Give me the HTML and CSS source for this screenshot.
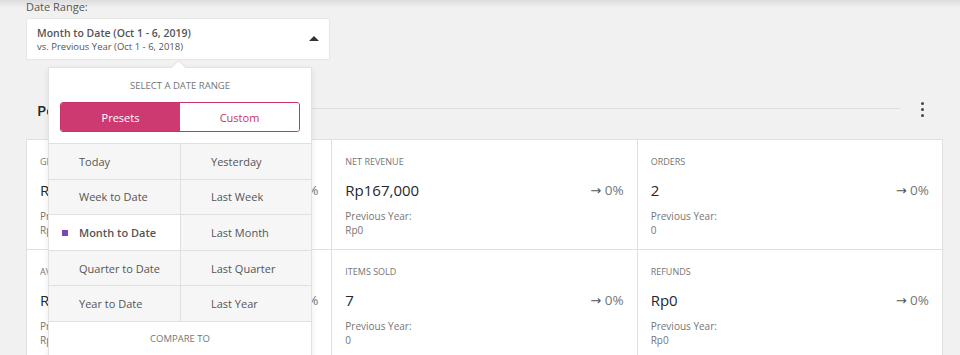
FILE: index.html
```html
<!DOCTYPE html>
<html lang="en">
  <head>
    <meta charset="UTF-8" />
    <meta name="viewport" content="width=device-width, initial-scale=1.0" />
    <title>Analytics - Revenue</title>
    <link rel="stylesheet" href="styles.css">
  </head>
  <body>
    <div class="top_shadow"></div>
    <div class="page">
      <div class="filter_label">Date Range:</div>
      <div class="date_filter">
        <button class="date_button">
          <span class="date_text">
            <span class="date_main">Month to Date (Oct 1 - 6, 2019)</span>
            <span class="date_compare">vs. Previous Year (Oct 1 - 6, 2018)</span>
          </span>
          <span class="caret"></span>
        </button>

        <!-- dropdown, opened -->
        <div class="popover">
          <div class="popover_title">Select a date range</div>
          <div class="tabs">
            <span class="tab active">Presets</span>
            <span class="tab">Custom</span>
          </div>
          <div class="presets">
            <div class="preset">Today</div>
            <div class="preset">Yesterday</div>
            <div class="preset">Week to Date</div>
            <div class="preset">Last Week</div>
            <div class="preset selected">Month to Date</div>
            <div class="preset">Last Month</div>
            <div class="preset">Quarter to Date</div>
            <div class="preset">Last Quarter</div>
            <div class="preset">Year to Date</div>
            <div class="preset">Last Year</div>
          </div>
          <div class="popover_title compare">Compare to</div>
        </div>
      </div>

      <div class="section_header">
        <h2>Performance</h2>
        <div class="header_line"></div>
        <span class="menu_dots"><i></i><i></i><i></i></span>
      </div>

      <div class="cards">
        <div class="card">
          <div class="card_label">Gross Revenue</div>
          <div class="card_row"><span class="card_value">Rp167,000</span><span class="delta"><span class="arrow">&#x2192;</span> 0%</span></div>
          <div class="card_prev">Previous Year:</div>
          <div class="card_prev">Rp0</div>
        </div>
        <div class="card">
          <div class="card_label">Net Revenue</div>
          <div class="card_row"><span class="card_value">Rp167,000</span><span class="delta"><span class="arrow">&#x2192;</span> 0%</span></div>
          <div class="card_prev">Previous Year:</div>
          <div class="card_prev">Rp0</div>
        </div>
        <div class="card">
          <div class="card_label">Orders</div>
          <div class="card_row"><span class="card_value">2</span><span class="delta"><span class="arrow">&#x2192;</span> 0%</span></div>
          <div class="card_prev">Previous Year:</div>
          <div class="card_prev">0</div>
        </div>
        <div class="card">
          <div class="card_label">Average Order Value</div>
          <div class="card_row"><span class="card_value">Rp83,500</span><span class="delta"><span class="arrow">&#x2192;</span> 0%</span></div>
          <div class="card_prev">Previous Year:</div>
          <div class="card_prev">Rp0</div>
        </div>
        <div class="card">
          <div class="card_label">Items Sold</div>
          <div class="card_row"><span class="card_value">7</span><span class="delta"><span class="arrow">&#x2192;</span> 0%</span></div>
          <div class="card_prev">Previous Year:</div>
          <div class="card_prev">0</div>
        </div>
        <div class="card">
          <div class="card_label">Refunds</div>
          <div class="card_row"><span class="card_value">Rp0</span><span class="delta"><span class="arrow">&#x2192;</span> 0%</span></div>
          <div class="card_prev">Previous Year:</div>
          <div class="card_prev">Rp0</div>
        </div>
      </div>
    </div>
  </body>
</html>
```

FILE: styles.css
```css
body {
  margin: 0;
  background-color: #f1f1f1;
  font-family: "Open Sans", "Noto Sans", sans-serif;
  color: #555;
  overflow: hidden;
}
.top_shadow {
  position: absolute;
  top: 0;
  left: 0;
  right: 0;
  height: 8px;
  background: linear-gradient(#dcdcdc, #f1f1f1);
}
.page {
  position: relative;
  padding: 0 17px 0 26px;
}
.filter_label {
  font-size: 11px;
  line-height: 14px;
  color: #555;
}
.date_filter {
  position: relative;
  width: 304px;
  margin-top: 4px;
}
.date_button {
  box-sizing: border-box;
  width: 304px;
  height: 42px;
  display: flex;
  align-items: center;
  justify-content: space-between;
  padding: 0 10px 0 10px;
  background-color: #fff;
  border: 1px solid #e6e6e6;
  border-radius: 2px;
  font-family: inherit;
  text-align: left;
  cursor: pointer;
}
.date_text {
  display: flex;
  flex-direction: column;
}
.date_main {
  font-size: 10.5px;
  font-weight: 600;
  color: #555;
  line-height: 14px;
}
.date_compare {
  font-size: 9.5px;
  color: #555;
  line-height: 13px;
}
.caret {
  width: 0;
  height: 0;
  border-left: 5px solid transparent;
  border-right: 5px solid transparent;
  border-bottom: 5px solid #333;
  margin-top: -1px;
}
.popover {
  position: absolute;
  z-index: 2;
  top: 49px;
  left: 22px;
  width: 264px;
  box-sizing: border-box;
  background-color: #fff;
  border: 1px solid #e2e2e2;
  box-shadow: 0 2px 6px rgba(0, 0, 0, 0.08);
}
.popover::before {
  content: "";
  position: absolute;
  top: -6px;
  left: 124px;
  width: 10px;
  height: 10px;
  background-color: #fff;
  border-top: 1px solid #e2e2e2;
  border-left: 1px solid #e2e2e2;
  transform: rotate(45deg);
}
.popover_title {
  text-align: center;
  text-transform: uppercase;
  font-size: 9.5px;
  color: #757575;
  line-height: 14px;
  padding-top: 11px;
}
.popover_title.compare {
  padding: 10px 0 20px;
}
.tabs {
  box-sizing: border-box;
  display: flex;
  margin: 9px 11px 11px;
  height: 30px;
  border: 1px solid #c93269;
  border-radius: 3px;
  overflow: hidden;
}
.tab {
  flex: 1;
  display: flex;
  align-items: center;
  justify-content: center;
  font-size: 11px;
  color: #c93269;
  background-color: #fff;
}
.tab.active {
  background-color: #cd3a72;
  color: #fff;
}
.presets {
  display: grid;
  grid-template-columns: 132px 1fr;
  background-color: #f6f6f6;
  border-top: 1px solid #e0e0e0;
}
.preset {
  box-sizing: border-box;
  position: relative;
  display: flex;
  align-items: center;
  height: 35.6px;
  padding-left: 30px;
  font-size: 11px;
  color: #555;
  border-bottom: 1px solid #e0e0e0;
  border-right: 1px solid #e0e0e0;
}
.preset:nth-child(2n) {
  border-right: none;
}
.preset.selected {
  background-color: #fff;
  font-weight: 600;
}
.preset.selected::before {
  content: "";
  position: absolute;
  left: 13px;
  top: 15px;
  width: 6px;
  height: 6px;
  background-color: #7b45b8;
}
.section_header {
  display: flex;
  align-items: center;
  height: 38px;
  margin-top: 31px;
  margin-bottom: 10px;
}
.section_header h2 {
  margin: 0 0 0 11px;
  font-size: 15px;
  font-weight: 600;
  color: #23282d;
}
.header_line {
  flex: 1;
  height: 1px;
  background-color: #dedede;
  margin: -3px 14px 0;
}
.menu_dots {
  display: flex;
  flex-direction: column;
  gap: 3px;
  width: 17px;
  align-items: center;
  margin-right: 12px;
  margin-top: -2px;
}
.menu_dots i {
  display: block;
  width: 3px;
  height: 3px;
  border-radius: 50%;
  background-color: #444;
}
.cards {
  display: grid;
  grid-template-columns: repeat(3, 1fr);
  background-color: #fff;
  border: 1px solid #e0e0e0;
  border-right: none;
  border-bottom: none;
}
.card {
  box-sizing: border-box;
  height: 110px;
  padding: 15px 13px 0;
  border-right: 1px solid #e0e0e0;
  border-bottom: 1px solid #e0e0e0;
}
.card_label {
  font-size: 9px;
  text-transform: uppercase;
  color: #757575;
  line-height: 14px;
}
.card_row {
  display: flex;
  justify-content: space-between;
  align-items: center;
  margin-top: 10px;
  height: 22px;
}
.card_value {
  font-size: 15px;
  color: #23282d;
}
.delta {
  font-size: 13.5px;
  color: #757575;
}
.arrow {
  font-family: "DejaVu Sans", sans-serif;
  font-size: 13px;
  color: #555;
}
.card_prev {
  font-size: 10px;
  line-height: 14px;
  color: #757575;
}
.card_row + .card_prev {
  margin-top: 8px;
}
```
